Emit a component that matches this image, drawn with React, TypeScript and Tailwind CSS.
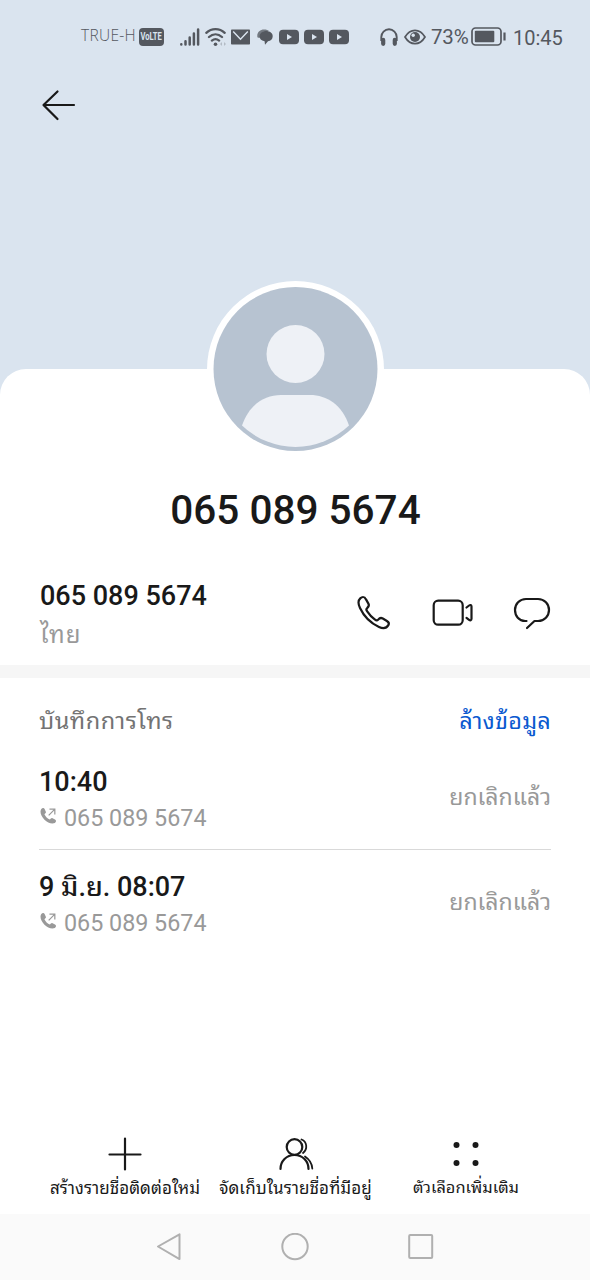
import React from 'react';

const FONT = "font-[Roboto,'Noto_Sans_Thai_Looped','Loma','Noto_Sans_Thai','Noto_Sans',sans-serif]";

const calls = [
    { time: "10:40", number: "065 089 5674", status: "ยกเลิกแล้ว" },
    { time: "9 มิ.ย. 08:07", number: "065 089 5674", status: "ยกเลิกแล้ว" }
];

function YoutubeBadge() {
    return (
        <svg className="ml-[5px] h-4 w-5 shrink-0" viewBox="0 0 20 16">
            <rect x="0" y="0.7" width="20" height="14.6" rx="4" fill="#54585f" />
            <path d="M8 5v6l5-3z" fill="#dae4ef" />
        </svg>
    );
}

function StatusBar() {
    return (
        <div className="flex h-[73px] items-center pl-[81px] text-[#54585f]">
            <span className="w-[58px] shrink-0 whitespace-nowrap pb-[1px] font-['Open_Sans'] text-[15.5px] font-light tracking-[0.3px]">TRUE-H</span>
            <span className="flex h-[18px] w-[25px] shrink-0 items-center justify-center rounded-[4px] bg-[#54585f] font-['Roboto'] text-[11.5px] font-bold text-[#dae4ef]">
                <span className="scale-x-[0.66]">VoLTE</span>
            </span>

            {/* Señal */}
            <svg className="ml-4 h-[18px] w-5 shrink-0" viewBox="0 0 20 18" stroke="currentColor" strokeWidth="2.5" strokeLinecap="round">
                <path d="M1.3 16.3v.2M5.5 13.3v3.2M9.7 9.5v7M13.9 5.5v11M18.1 1.5v15" />
            </svg>
            {/* Wifi */}
            <svg className="ml-[5px] h-5 w-[22px] shrink-0" viewBox="0 0 22 20" fill="none" stroke="currentColor" strokeWidth="2.3" strokeLinecap="round">
                <path d="M1.3 5.8c5.3-4.9 13.1-4.9 18.4 0M4 10c3.9-3.5 9.1-3.5 13 0M6.9 13.6c2.3-1.9 4.9-1.9 7.2 0" />
                <circle cx="10.5" cy="17.3" r="1.8" fill="currentColor" stroke="none" />
                <path d="M17 15l-2 2 2 2zM19 15l2 2-2 2z" fill="#b3bbc5" stroke="none" />
            </svg>
            {/* Correo */}
            <svg className="ml-1 h-4 w-[19px] shrink-0" viewBox="0 0 19 16">
                <rect y="0.5" width="19" height="15" rx="0.8" fill="currentColor" />
                <path d="M2.2 2.5l7.3 7.7 7.3-7.7" fill="none" stroke="#dae4ef" strokeWidth="1.4" />
            </svg>
            {/* Mensaje */}
            <svg className="ml-[7px] h-4 w-4 shrink-0" viewBox="0 0 16 16">
                <path d="M.4 8.2C-.4 3.5 3 .6 7 .6c2.4 0 4.2.6 5.3 1.6C7 1.3 3.3 4 3 8.8c-1.3 0-2.2-.1-2.6-.6z" fill="#747a82" />
                <path d="M9 2c4 0 6.7 2.2 6.7 5.2 0 2.8-2 4.8-4.7 5.1L8 15.7l-.4-3.4C4 11.7 2.600 9.900 2.600 7.600 2.600 4.400 5.400 2 9 2z" fill="currentColor" />
            </svg>
            <span className="ml-[1px] flex">
                <YoutubeBadge />
                <YoutubeBadge />
                <YoutubeBadge />
            </span>

            {/* Auriculares */}
            <svg className="ml-[31px] h-[18px] w-[18px] shrink-0" viewBox="0 0 18 18" fill="none" stroke="currentColor">
                <path d="M1.3 13V9a7.7 7.7 0 0 1 15.4 0v4" strokeWidth="1.9" />
                <path d="M3.2 11.9v3.9M14.8 11.9v3.9" strokeWidth="4.2" strokeLinecap="round" />
            </svg>
            {/* Modo protección ocular */}
            <svg className="ml-[6px] h-4 w-[22px] shrink-0" viewBox="0 0 22 16" fill="none" stroke="currentColor">
                <path d="M1 8c5.2-8.9 14.8-8.9 20 0-5.2 8.9-14.8 8.9-20 0z" strokeWidth="1.7" />
                <circle cx="11" cy="8" r="5" fill="currentColor" stroke="none" />
                <circle cx="9.2" cy="6.2" r="1.7" fill="#dae4ef" stroke="none" />
            </svg>
            <span className="ml-[5px] w-10 shrink-0 whitespace-nowrap pt-[2px] font-['Roboto'] text-[20.5px] tracking-[-0.2px]">73%</span>
            {/* Batería */}
            <svg className="h-[19px] w-9 shrink-0" viewBox="0 0 36 19" fill="none" stroke="currentColor">
                <rect x="1" y="1" width="29" height="17" rx="3.5" strokeWidth="1.7" />
                <rect x="3.8" y="3.8" width="19.5" height="11.4" rx="1" fill="currentColor" stroke="none" />
                <path d="M33.5 5.5v8" strokeWidth="2.2" />
            </svg>
            <span className="ml-[6px] shrink-0 whitespace-nowrap pt-[2px] font-['Roboto'] text-[20px]">10:45</span>
        </div>
    );
}

function Avatar() {
    return (
        <svg className="mx-auto -mt-[88px] block h-[177px] w-[177px]" viewBox="0 0 177 177">
            <circle cx="88.5" cy="88.5" r="88.5" fill="#fff" />
            <circle cx="88.5" cy="88" r="82" fill="#b7c3d1" />
            <circle cx="88.5" cy="73" r="29" fill="#eef1f6" />
            <path d="M35 144.5C42 124 57 114 74 114h29c17 0 32 10 39 30.5a77.5 77.5 0 0 1-107 0z" fill="#eef1f6" />
        </svg>
    );
}

function ContactRow() {
    return (
        <div className="mt-[37px] flex h-[94px] justify-between pr-[38px] pl-10">
            <div className="pt-[6px]">
                <p className="h-10 whitespace-nowrap text-[27px] leading-[38px] font-medium text-[#191919]">065 089 5674</p>
                <p className="text-[24px] leading-9 tracking-[1px] text-[#999999]">ไทย</p>
            </div>
            <div className="mt-[22px] flex h-10 items-start text-[#191919]">
                <svg className="h-10 w-10" viewBox="0 0 40 40" fill="none" stroke="currentColor" strokeWidth="2.2" strokeLinejoin="round">
                    <path d="M5.5 9.5C5.5 6 8.5 3.8 10.5 4c1.3 0 1.9 1.3 2.5 2.4l2.4 4.2c1.2 2.3.4 3.2-1.2 4.4-1 .8-1 2 0 3.3 2 3 4.5 5.8 7.5 8.1 1.5 1.2 2.6 1.3 3.5.2 1.3-1.6 2.6-2.2 4.6-1.1l4.1 2.5c2 1.2 2.5 2.4 1.5 4.1-1.7 2.9-5.2 3.8-9.4 1.9C17.5 30 10.5 22.5 7 15c-.9-2-1.5-3.7-1.5-5.5z" />
                </svg>
                <svg className="ml-[39px] h-10 w-11" viewBox="0 0 44 40" fill="none" stroke="currentColor" strokeWidth="2.2" strokeLinecap="round" strokeLinejoin="round">
                    <rect x="1.7" y="7.7" width="29" height="24" rx="4.5" />
                    <path d="M34.5 14.5l2.6-2c1.2-.9 2.4-.5 2.4 1v12.3c0 1.5-1.2 1.9-2.4 1l-2.6-2" />
                </svg>
                <svg className="ml-9 h-10 w-10" viewBox="0 0 40 40" fill="none" stroke="currentColor" strokeWidth="2.2" strokeLinecap="round" strokeLinejoin="round">
                    <path d="M14.5 28h-1.3C7 28 3 22.8 3 17S7.5 6 14 6h12c6.5 0 11 5.2 11 11s-4.5 11-11 11h-3.5l-7.5 7" />
                </svg>
            </div>
        </div>
    );
}

function OutgoingIcon() {
    return (
        <svg className="mt-[-4px] ml-[1px] h-[18px] w-[17px]" viewBox="0 0 18 18" fill="none">
            <path d="M1.2 1.8c1.3-1.5 3-1.6 3.8 0l1.2 2.6c.5 1.2-.8 1.9-1.5 2.7.8 2.2 3.5 4.8 5.8 5.7.9-.8 1.5-2 2.8-1.4l2.6 1.3c1.6.9 1.3 2.7-.2 3.8C9 19.5-2.3 8.5 1.2 1.8z" fill="#999999" />
            <path d="M9.2 8.3l6-6M10 1.8h5.7v5.6" stroke="#999999" strokeWidth="1.3" />
        </svg>
    );
}

function CallLog() {
    return (
        <section className="pr-[39px] pl-[39px]">
            <div className="flex h-[77px] items-center justify-between pt-[10px] text-[23.5px]">
                <h2 className="tracking-[0.5px] text-[#737373]">บันทึกการโทร</h2>
                <button className="tracking-[0.2px] text-[#0a59d0]">ล้างข้อมูล</button>
            </div>
            {calls.map((call, index) => (
                <div key={index} className={`flex items-center justify-between ${index > 0 ? 'h-[106px] border-t border-[#d9d9d9] pt-[5px]' : 'h-[94px] pb-1'}`}>
                    <div>
                        <p className="h-9 whitespace-nowrap text-[27px] leading-9 font-medium text-[#191919]">{call.time}</p>
                        <div className="flex h-9 items-center whitespace-nowrap text-[23.3px] text-[#999999]">
                            <OutgoingIcon />
                            <span className="ml-[7px]">{call.number}</span>
                        </div>
                    </div>
                    <span className="pb-[3px] text-[23px] text-[#999999]">{call.status}</span>
                </div>
            ))}
        </section>
    );
}

function Actions() {
    return (
        <div className="mt-auto flex h-[80px] pl-[38px] text-[#191919]">
            <div className="flex w-[174px] flex-col items-center">
                <svg className="h-10 w-10" viewBox="0 0 40 40" stroke="currentColor" strokeWidth="2.2" strokeLinecap="round">
                    <path d="M20 4.5v31M4.5 20.5h31" />
                </svg>
                <span className="whitespace-nowrap text-[17px] leading-7 tracking-[0.05px]">สร้างรายชื่อติดต่อใหม่</span>
            </div>
            <div className="flex w-[167px] flex-col items-center">
                <svg className="h-10 w-10" viewBox="0 0 40 40" fill="none" stroke="currentColor" strokeWidth="2.2" strokeLinecap="round">
                    <circle cx="18.5" cy="13" r="7.8" />
                    <path d="M4.5 35c0-8 6-14 14-14s14 6 14 14" />
                    <path d="M25.5 5.5c5.5 2 6.5 9.5 1.5 13.5M29 22.5c4.5 3 7 7.3 7.3 12" strokeWidth="1.8" />
                </svg>
                <span className="whitespace-nowrap text-[17px] leading-7 tracking-[0.1px]">จัดเก็บในรายชื่อที่มีอยู่</span>
            </div>
            <div className="flex w-[174px] flex-col items-center">
                <svg className="h-10 w-10" viewBox="0 0 40 40" fill="currentColor">
                    <circle cx="10.5" cy="11" r="3" />
                    <circle cx="29.5" cy="11" r="3" />
                    <circle cx="10.5" cy="29" r="3" />
                    <circle cx="29.5" cy="29" r="3" />
                </svg>
                <span className="whitespace-nowrap text-[16.4px] leading-7">ตัวเลือกเพิ่มเติม</span>
            </div>
        </div>
    );
}

function NavBar() {
    return (
        <nav className="flex h-[66px] shrink-0 items-center justify-between bg-[#fafafa] pr-[155px] pl-[155px]">
            <svg className="h-7 w-7" viewBox="0 0 28 28" fill="none" stroke="#b0b0b0" strokeWidth="2" strokeLinejoin="round">
                <path d="M3 13.5L24.5 1.3v24.8z" />
            </svg>
            <svg className="h-7 w-7" viewBox="0 0 28 28" fill="none" stroke="#b0b0b0" strokeWidth="2">
                <circle cx="14" cy="13.5" r="12.7" />
            </svg>
            <svg className="h-7 w-7" viewBox="0 0 28 28" fill="none" stroke="#b0b0b0" strokeWidth="2">
                <rect x="2.2" y="2" width="23" height="23" rx="1" />
            </svg>
        </nav>
    );
}

export default function App() {
    return (
        <div className={`flex h-[1280px] w-[590px] flex-col overflow-hidden bg-[#dae4ef] ${FONT}`}>
            <header className="h-[369px] shrink-0">
                <StatusBar />
                <svg className="mt-3 ml-[39px] h-10 w-10" viewBox="0 0 40 40" fill="none" stroke="#191919" strokeWidth="2.2" strokeLinecap="round" strokeLinejoin="round">
                    <path d="M35 20H5M18.5 6.5L4.5 20 18.5 34" />
                </svg>
            </header>

            <main className="flex grow flex-col rounded-t-[26px] bg-white">
                <Avatar />
                <h1 className="mt-7 h-12 pl-[1px] text-center text-[40.5px] leading-[49px] font-medium text-[#191919]">065 089 5674</h1>
                <ContactRow />
                <div className="h-[13px] shrink-0 bg-[#f6f6f6]" />
                <CallLog />
                <Actions />
            </main>
            <NavBar />
        </div>
    );
}
